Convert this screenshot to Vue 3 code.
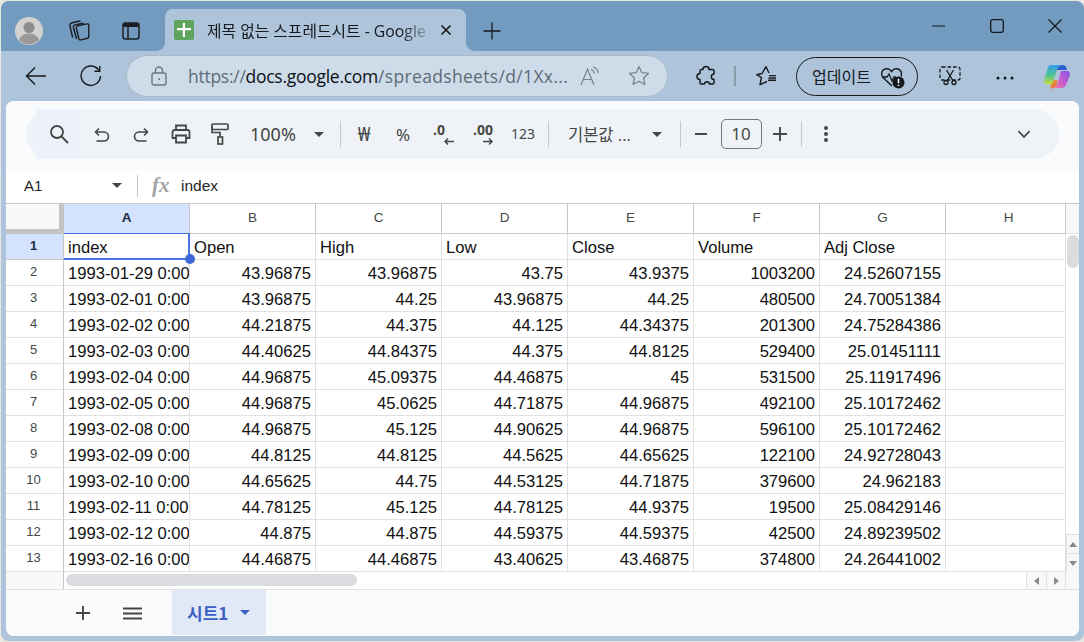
<script setup>
const cols = ['A', 'B', 'C', 'D', 'E', 'F', 'G', 'H']
const heads = ['index', 'Open', 'High', 'Low', 'Close', 'Volume', 'Adj Close', '']
const rows = [
  ['1993-01-29 0:00', '43.96875', '43.96875', '43.75', '43.9375', '1003200', '24.52607155', ''],
  ['1993-02-01 0:00', '43.96875', '44.25', '43.96875', '44.25', '480500', '24.70051384', ''],
  ['1993-02-02 0:00', '44.21875', '44.375', '44.125', '44.34375', '201300', '24.75284386', ''],
  ['1993-02-03 0:00', '44.40625', '44.84375', '44.375', '44.8125', '529400', '25.01451111', ''],
  ['1993-02-04 0:00', '44.96875', '45.09375', '44.46875', '45', '531500', '25.11917496', ''],
  ['1993-02-05 0:00', '44.96875', '45.0625', '44.71875', '44.96875', '492100', '25.10172462', ''],
  ['1993-02-08 0:00', '44.96875', '45.125', '44.90625', '44.96875', '596100', '25.10172462', ''],
  ['1993-02-09 0:00', '44.8125', '44.8125', '44.5625', '44.65625', '122100', '24.92728043', ''],
  ['1993-02-10 0:00', '44.65625', '44.75', '44.53125', '44.71875', '379600', '24.962183', ''],
  ['1993-02-11 0:00', '44.78125', '45.125', '44.78125', '44.9375', '19500', '25.08429146', ''],
  ['1993-02-12 0:00', '44.875', '44.875', '44.59375', '44.59375', '42500', '24.89239502', ''],
  ['1993-02-16 0:00', '44.46875', '44.46875', '43.40625', '43.46875', '374800', '24.26441002', '']
]
</script>

<template>
  <div class="window">
    <header class="titlebar">
      <div class="avatar">
        <svg width="28" height="28" viewBox="0 0 28 28"><circle cx="14" cy="14" r="14" fill="#d4d2d0"/><circle cx="14" cy="10.500" r="5.500" fill="#8f8d8b"/><path d="M4 23c2-5 6-6.500 10-6.500S22 18 24 23a14 14 0 0 1-20 0z" fill="#9a9896"/></svg>
      </div>
      <div class="tb-icon first">
        <svg width="22" height="22" viewBox="0 0 22 22" fill="none" stroke="#1b1f24" stroke-width="1.400" stroke-linejoin="round" stroke-linecap="round"><path d="M9.500 5.800 19 3.900c1-.2 1.800.4 1.800 1.400v11.400c0 .8-.4 1.300-1.200 1.500l-6.700 1.700c-1 .2-1.700-.2-2-1.200L8.300 8c-.2-1 .2-1.900 1.200-2.200z"/><path d="M15 3.200 8 4.600C6 5 5 6 5.500 8l3 10.500"/><path d="M12 1 5 2.500C3 3 1.500 4 2 6l2.500 11"/></svg>
      </div>
      <div class="tb-icon">
        <svg width="20" height="20" viewBox="0 0 20 20" fill="none"><rect x="2" y="2" width="16" height="16" rx="2.500" stroke="#1b1f24" stroke-width="1.500"/><path d="M2 3.500a1.500 1.500 0 0 1 1.500-1.500h13a1.500 1.500 0 0 1 1.500 1.500V6H2z" fill="#1b1f24"/><path d="M7 6v12" stroke="#1b1f24" stroke-width="1.500"/></svg>
      </div>
      <div class="tab">
        <svg class="favicon" width="20" height="20" viewBox="0 0 20 20"><rect width="20" height="20" rx="2" fill="#5ea45c"/><path d="M3 8h14v2.200H11V17H8.800v-6.800H3z" fill="#fff"/><path d="M8.800 3H11v5H8.800z" fill="#fff"/></svg>
        <span class="tab-title">제목 없는 스프레드시트 - Google</span>
        <svg class="tab-close" width="12" height="12" viewBox="0 0 12 12" stroke="#111" stroke-width="1.500"><path d="M1.500 1.500l9 9M10.500 1.500l-9 9"/></svg>
      </div>
      <div class="newtab">
        <svg width="18" height="18" viewBox="0 0 18 18" stroke="#15191e" stroke-width="1.300"><path d="M9 .5v17M.5 9h17"/></svg>
      </div>
      <div class="win-controls">
        <div class="win-btn"><svg width="14" height="14" viewBox="0 0 14 14" stroke="#14181d" stroke-width="1.200"><path d="M0 7h13"/></svg></div>
        <div class="win-btn"><svg width="14" height="14" viewBox="0 0 14 14" fill="none" stroke="#14181d" stroke-width="1.300"><rect x=".7" y=".7" width="12.600" height="12.600" rx="2"/></svg></div>
        <div class="win-btn"><svg width="14" height="14" viewBox="0 0 14 14" stroke="#14181d" stroke-width="1.200"><path d="M.5.500l13 13M13.500.500l-13 13"/></svg></div>
      </div>
    </header>

    <nav class="navbar">
      <div class="nav-btn back"><svg width="22" height="20" viewBox="0 0 22 20" fill="none" stroke="#15191e" stroke-width="1.400"><path d="M21 10H1.500M10 1.500 1.500 10l8.500 8.500"/></svg></div>
      <div class="nav-btn reload"><svg width="22" height="22" viewBox="0 0 22 22" fill="none" stroke="#15191e" stroke-width="1.400"><path d="M19 5.500A9.700 9.700 0 1 0 20.500 11"/><path d="M19.800 1v5.300h-5.300"/></svg></div>
      <div class="address">
        <svg class="lock" width="16" height="20" viewBox="0 0 16 20" fill="none" stroke="#6d7680" stroke-width="1.400"><rect x="1" y="7" width="14" height="12" rx="2"/><path d="M4.500 7V4.500a3.500 3.500 0 0 1 7 0V7"/><circle cx="8" cy="13" r="1" fill="#6d7680" stroke="none"/></svg>
        <span class="url"><span class="url-dim tight">https://</span><span class="tight">docs.google.com</span><span class="url-dim wide">/spreadsheets/d/1Xx...</span></span>
        <svg class="readaloud" width="20" height="20" viewBox="0 0 20 20" fill="none" stroke="#7b848d" stroke-width="1.200"><path d="M1 19 7.500 3 14 19M3.500 13.500h8"/><path d="M11 3.500c2 .5 3 2 3.500 4M13 .8c3 .8 4.800 3.200 5.400 6"/></svg>
        <svg class="star" width="22" height="22" viewBox="0 0 22 22" fill="none" stroke="#7b848d" stroke-width="1.300" stroke-linejoin="round"><path d="M11 1.500l2.800 6.200 6.700.7-5 4.500 1.400 6.600L11 16.200l-5.900 3.300 1.400-6.600-5-4.500 6.700-.7z"/></svg>
      </div>
      <div class="nav-btn ext"><svg width="20" height="22" viewBox="0 0 20 22" fill="none" stroke="#15191e" stroke-width="1.500" stroke-linejoin="round"><path d="M7 4.500c0-4 6-4 6 0h3.500A1.500 1.500 0 0 1 18 6v3c-3.500 0-3.500 5.500 0 5.500v3a1.500 1.500 0 0 1-1.500 1.500h-3c-.5-3-4.500-3-5 0H5.500A1.500 1.500 0 0 1 4 17.500v-3c-4 0-4-6 0-6V6a1.500 1.500 0 0 1 1.500-1.500z"/></svg></div>
      <div class="nav-sep"></div>
      <div class="nav-btn favs"><svg width="22" height="22" viewBox="0 0 22 22" fill="none" stroke="#15191e" stroke-width="1.400" stroke-linejoin="round"><path d="M12 16.500 5 19.700l1.500-7.200L1.700 9.700 7 8.500 11 1.700 14 8"/><path d="M14 10.600h7M13.500 13h7.500M13 15.300h8"/></svg></div>
      <div class="update">
        <span class="update-text">업데이트</span>
        <svg class="heart" width="26" height="24" viewBox="0 0 26 24" fill="none"><path d="M12 20 3 11.500C.5 8.500 1.500 4 5 3c2.500-.7 5 .3 6.500 2.500C13 3.300 15.500 2.300 18 3c3.300 1 4.300 4.500 3 7.500" stroke="#15191e" stroke-width="1.400"/><path d="M2 11h5l2-3 3 7 2-4h2" stroke="#15191e" stroke-width="1.300"/><circle cx="18.500" cy="16.500" r="6" fill="#15191e"/><path d="M18.500 12.800v4.400M18.500 18.800v1.200" stroke="#fff" stroke-width="1.600"/></svg>
      </div>
      <div class="nav-btn shot"><svg width="22" height="20" viewBox="0 0 22 20" fill="none" stroke="#15191e" stroke-width="1.300"><rect x="1" y="1" width="20" height="13" rx="2" stroke-dasharray="3.500 2"/><path d="M7.500 4l6 10M14.500 4l-6 10"/><circle cx="7" cy="16.500" r="2"/><circle cx="15" cy="16.500" r="2"/></svg></div>
      <div class="nav-btn dots"><svg width="18" height="4" viewBox="0 0 18 4" fill="#15191e"><circle cx="2" cy="2" r="1.500"/><circle cx="9" cy="2" r="1.500"/><circle cx="16" cy="2" r="1.500"/></svg></div>
      <div class="nav-btn copilot">
        <svg width="28" height="28" viewBox="0 0 28 28">
          <defs>
            <linearGradient id="cpa" x1="0" y1="0" x2="0" y2="1"><stop offset="0" stop-color="#2f9fe6"/><stop offset=".55" stop-color="#55c48f"/><stop offset="1" stop-color="#d2dc3e"/></linearGradient>
            <linearGradient id="cpb" x1="1" y1="0" x2="0" y2="1"><stop offset="0" stop-color="#7f55e6"/><stop offset=".6" stop-color="#d25fcb"/><stop offset="1" stop-color="#f47a94"/></linearGradient>
            <linearGradient id="cpc" x1="0" y1="0" x2="1" y2="1"><stop offset="0" stop-color="#f0a23c"/><stop offset="1" stop-color="#e4603f"/></linearGradient>
          </defs>
          <path d="M14 7c.5-2 2-4 5-4h1c2 0 3 1.500 3.500 3l.5 2H14z" fill="#2e62d4"/>
          <path d="M8 18h6.500L14 22c-.5 2.500-3 4.500-5.500 4.500-2 0-1.500-1-.5-2z" fill="url(#cpc)"/>
          <path d="M8 3h11c-3 0-4.500 2-5 4l-3.500 12c-.5 2-2 3.500-4 3.500h-2C2 22.500.5 20 1.300 17.500L4.500 7C5.300 4.500 6 3 8 3z" fill="url(#cpa)"/>
          <path d="M18 9h6c2 0 3.500 2 2.800 4.500L24 21c-1 3-3 5-6 5H9c3 0 5-2 5.800-4.500z" fill="url(#cpb)"/>
        </svg>
      </div>
    </nav>

    <main class="content">
      <div class="toolstrip">
        <div class="pill">
          <div class="tool search"><svg width="20" height="20" viewBox="0 0 20 20" fill="none" stroke="#444746" stroke-width="1.800"><circle cx="8" cy="8" r="6"/><path d="M12.500 12.500 19 19"/></svg></div>
          <div class="tool"><svg width="16" height="16" viewBox="0 0 16 16" fill="none" stroke="#444746" stroke-width="1.600"><path d="M2.500 15h7.500a4.500 4.500 0 0 0 0-9H2M5 2.500 1.500 6 5 9.500"/></svg></div>
          <div class="tool"><svg width="16" height="16" viewBox="0 0 16 16" fill="none" stroke="#444746" stroke-width="1.600"><path d="M13.500 15H6a4.500 4.500 0 0 1 0-9h8M11 2.500 14.500 6 11 9.500"/></svg></div>
          <div class="tool"><svg width="20" height="20" viewBox="0 0 20 20" fill="none" stroke="#444746" stroke-width="1.800"><path d="M5 6V1.500h10V6M5 14H1.500V8a2 2 0 0 1 2-2h13a2 2 0 0 1 2 2v6H15"/><path d="M5 11.500h10v7H5z"/></svg></div>
          <div class="tool"><svg width="18" height="22" viewBox="0 0 18 22" fill="none" stroke="#444746" stroke-width="1.700"><rect x="1" y="1" width="16" height="5.500" rx="1"/><path d="M1 3.500v6h8v4"/><rect x="7" y="14" width="4.500" height="7"/></svg></div>
          <div class="tool zoom">100%</div>
          <div class="tool"><span class="caret"></span></div>
          <div class="tool"><span class="sep"></span></div>
          <div class="tool won">₩</div>
          <div class="tool pct">%</div>
          <div class="tool">
            <div class="dec dec-one"><span class="dec-text">.0</span><svg class="dec-arrow" width="10" height="7" viewBox="0 0 10 7" fill="none" stroke="#444746" stroke-width="1.500"><path d="M10 3.500H1M4 .5l-3 3 3 3"/></svg></div>
          </div>
          <div class="tool">
            <div class="dec"><span class="dec-text">.00</span><svg class="dec-arrow" width="10" height="7" viewBox="0 0 10 7" fill="none" stroke="#444746" stroke-width="1.500"><path d="M0 3.500h9M6 .5l3 3-3 3"/></svg></div>
          </div>
          <div class="tool numfmt">123</div>
          <div class="tool"><span class="sep"></span></div>
          <div class="tool font">기본값 ...</div>
          <div class="tool"><span class="caret"></span></div>
          <div class="tool"><span class="sep"></span></div>
          <div class="tool"><svg width="14" height="4" viewBox="0 0 14 4"><path d="M1 2h12" stroke="#444746" stroke-width="2"/></svg></div>
          <div class="tool"><div class="fontsize">10</div></div>
          <div class="tool"><svg width="14" height="14" viewBox="0 0 14 14"><path d="M0 7h14M7 0v14" stroke="#444746" stroke-width="1.900"/></svg></div>
          <div class="tool"><span class="sep"></span></div>
          <div class="tool"><svg width="6" height="18" viewBox="0 0 6 18" fill="#444746"><circle cx="3" cy="3" r="2"/><circle cx="3" cy="9" r="2"/><circle cx="3" cy="15" r="2"/></svg></div>
          <div></div>
          <div class="tool"><svg width="14" height="9" viewBox="0 0 14 9" fill="none" stroke="#444746" stroke-width="1.800"><path d="M1.500 1.200 7 7l5.500-5.800"/></svg></div>
        </div>
      </div>

      <div class="formula">
        <span class="namebox">A1</span>
        <span class="caret namecaret"></span>
        <span class="fsep"></span>
        <span class="fx">fx</span>
        <span class="fval">index</span>
      </div>

      <div class="sheet">
        <div class="grid">
          <div class="corner"></div>
          <div v-for="c in cols" :key="c" class="colhead" :class="{ active: c === 'A', last: c === 'H' }">{{ c }}</div>
          <div class="vtrack-head"></div>

          <div class="rowhead active">1</div>
          <div v-for="(h, i) in heads" :key="h + i" class="cell" :class="{ selected: i === 0 }">
            {{ h }}<span v-if="i === 0" class="handle"></span>
          </div>

          <template v-for="(r, ri) in rows" :key="ri">
            <div class="rowhead">{{ ri + 2 }}</div>
            <div v-for="(v, ci) in r" :key="ci" class="cell" :class="{ right: ci > 0 }">{{ v }}</div>
          </template>

          <div class="vtrack">
            <span class="vthumb"></span>
            <div class="varrow"><span class="arr-up"></span></div>
            <div class="varrow"><span class="arr-down"></span></div>
          </div>
        </div>
        <div class="hscroll">
          <div class="hs-head"></div>
          <div class="hs-track"><span class="hthumb"></span></div>
          <div class="hs-arrow"><span class="arr-left"></span></div>
          <div class="hs-arrow"><span class="arr-right"></span></div>
          <div class="hs-end"></div>
        </div>
      </div>

      <footer class="sheetbar">
        <div class="sb-btn"><svg width="14" height="14" viewBox="0 0 14 14"><path d="M0 7h14M7 0v14" stroke="#444746" stroke-width="1.900"/></svg></div>
        <div class="sb-btn menu"><svg width="19" height="13" viewBox="0 0 19 13"><path d="M0 1.500h19M0 6.500h19M0 11.500h19" stroke="#444746" stroke-width="1.900"/></svg></div>
        <div class="sheettab"><span>시트1</span><span class="caret blue"></span></div>
      </footer>
    </main>
  </div>
</template>

<style>
html, body { margin: 0; background: #e9e7e4; overflow: hidden; }
</style>

<style scoped>
.window {
  box-sizing: border-box;
  width: 1083px;
  height: 640px;
  margin: 1px 0 0 1px;
  background: #adc4da;
  border-radius: 8px;
  overflow: hidden;
  display: flex;
  flex-direction: column;
  font-family: "Open Sans", "Noto Sans CJK KR", sans-serif;
  color: #15191e;
}

/* title bar */
.titlebar {
  height: 50px;
  flex: none;
  background: #739abf;
  display: flex;
  align-items: flex-start;
}
.avatar { margin: 16px 0 0 14px; width: 28px; height: 28px; }
.tb-icon { width: 52px; height: 30px; margin-top: 15px; display: flex; align-items: center; justify-content: center; }
.tb-icon.first { margin-left: 10px; }
.tab {
  position: relative;
  box-sizing: border-box;
  width: 301px;
  height: 42px;
  margin: 8px 0 0 8px;
  padding: 0 14px 0 9px;
  background: #adc4da;
  border-radius: 8px 8px 0 0;
  display: flex;
  align-items: center;
  gap: 13px;
}
.tab::before, .tab::after {
  content: "";
  position: absolute;
  bottom: 0;
  width: 8px;
  height: 8px;
  background: radial-gradient(circle at 0 0, #739abf 7.500px, #adc4da 8px);
}
.tab::before { left: -8px; }
.tab::after { right: -8px; background: radial-gradient(circle at 100% 0, #739abf 7.500px, #adc4da 8px); }
.favicon { flex: none; }
.tab-title {
  flex: none;
  white-space: nowrap;
  font-size: 15.800px;
  color: #15191e;
  -webkit-mask-image: linear-gradient(90deg, #000 88%, rgba(0, 0, 0, .25) 100%);
  mask-image: linear-gradient(90deg, #000 88%, rgba(0, 0, 0, .25) 100%);
}
.tab-close { flex: none; margin-left: auto; }
.newtab { width: 18px; height: 18px; margin: 21px 0 0 17px; }
.win-controls { margin-left: auto; display: flex; }
.win-btn { width: 58px; height: 50px; display: flex; align-items: center; justify-content: center; }

/* nav bar */
.navbar {
  height: 50px;
  flex: none;
  display: flex;
  align-items: center;
  position: relative;
}
.nav-btn { display: flex; align-items: center; justify-content: center; flex: none; }
.back { width: 30px; margin-left: 20px; }
.reload { width: 30px; margin-left: 25px; }
.address {
  box-sizing: border-box;
  width: 542px;
  height: 42px;
  margin-left: 20px;
  background: #cddce8;
  border: 1px solid #a9bacb;
  border-radius: 21px;
  display: flex;
  align-items: center;
  padding-left: 24px;
}
.lock { flex: none; }
.url { margin-left: 21px; font-size: 17.500px; white-space: nowrap; color: #0c1116; width: 378px; }
.url-dim { color: #5f6b77; }
.tight { letter-spacing: -.27px; }
.wide { letter-spacing: .33px; }
.readaloud { margin-left: 14px; flex: none; }
.star { margin-left: 28px; flex: none; }
.ext { width: 24px; margin-left: 26px; }
.nav-sep { width: 2px; height: 20px; background: #8b9aa9; margin-left: 16px; flex: none; }
.favs { width: 26px; margin-left: 17px; }
.update {
  box-sizing: border-box;
  width: 122px;
  height: 39px;
  margin-left: 17px;
  border: 1.500px solid #15191e;
  border-radius: 20px;
  display: flex;
  align-items: center;
  padding-left: 15px;
  flex: none;
}
.update-text { font-size: 16px; white-space: nowrap; width: 60px; flex: none; }
.heart { margin-left: 8px; margin-top: 3px; flex: none; }
.shot { width: 24px; margin-left: 20px; }
.dots { width: 20px; margin-left: 33px; margin-top: 4px; }
.copilot { width: 28px; margin-left: 28px; }

/* content */
.content {
  width: 1073px;
  height: 535px;
  margin-left: 5px;
  background: #fff;
  border-radius: 8px;
  overflow: hidden;
  flex: none;
  display: flex;
  flex-direction: column;
}
.toolstrip { height: 69px; flex: none; background: #f9fbfd; padding: 8px 20px 0 20px; box-sizing: border-box; }
.pill {
  box-sizing: border-box;
  height: 50px;
  width: 1033px;
  background: #eff3f8;
  border-radius: 25px;
  padding: 0 15px 0 13px;
  display: grid;
  grid-template-columns: 40px 46px 32px 48px 30px 70px 28px 14px 34px 44px 38px 40px 40px 10px 88px 32px 14px 28px 52px 26px 16px 34px 1fr 40px;
  align-items: center;
  color: #444746;
}
.tool { display: flex; align-items: center; justify-content: center; height: 50px; }
.search { background: #edf2fa; margin: 0 -3px; }
.zoom { justify-content: flex-start; padding-left: 15px; font-size: 18px; font-family: "Noto Sans", sans-serif; }
.won { font-size: 19px; margin-top: -1px; font-family: "Noto Sans", "Noto Sans CJK KR", sans-serif; }
.pct { font-size: 17px; font-family: "Noto Sans", sans-serif; }
.numfmt { font-size: 14px; margin-top: -1px; font-family: "Noto Sans", sans-serif; }
.dec { display: flex; flex-direction: column; align-items: flex-end; }
.dec-one { padding-right: 10px; }
.dec-one .dec-arrow { margin-right: -9px; }
.dec-text { font-size: 14px; line-height: 14px; font-weight: 700; font-family: "Noto Sans", sans-serif; }
.dec-arrow { display: block; margin-top: 1px; }
.font { justify-content: flex-start; padding-left: 15px; font-size: 16.500px; white-space: nowrap; }
.caret { display: block; width: 0; height: 0; border-left: 5px solid transparent; border-right: 5px solid transparent; border-top: 5px solid #444746; }
.sep { display: block; width: 1px; height: 26px; background: #c7c7c7; }
.fontsize {
  box-sizing: border-box;
  width: 41px;
  height: 30px;
  border: 1px solid #747775;
  border-radius: 5px;
  text-align: center;
  line-height: 28px;
  font-size: 17px;
  font-family: "Noto Sans", sans-serif;
}

/* formula bar */
.formula {
  height: 34px;
  padding-bottom: 2px;
  flex: none;
  display: flex;
  align-items: center;
  border-bottom: 1px solid #c7c7c7;
  box-sizing: border-box;
  padding-left: 18px;
  font-family: "Liberation Sans", sans-serif;
  font-size: 15px;
}
.namebox { width: 88px; color: #1f1f1f; }
.namecaret { flex: none; }
.fsep { width: 1px; height: 22px; background: #c7c7c7; margin-left: 15px; }
.fx { font-family: "Liberation Serif", serif; font-style: italic; font-size: 21px; color: #a3a3a3; margin-left: 14px; width: 29px; font-weight: 700; }
.fval { color: #1f1f1f; font-size: 15.500px; }

/* grid */
.sheet { flex: none; font-family: "Liberation Sans", sans-serif; }
.grid {
  display: grid;
  grid-template-columns: 58px repeat(7, 126px) 120px 13px;
  grid-template-rows: 30px repeat(13, 26px);
}
.corner { box-sizing: border-box; background: #f8f9fa; border-right: 5px solid #c4c4c4; border-bottom: 5px solid #c4c4c4; }
.colhead {
  box-sizing: border-box;
  border-right: 1px solid #c7c7c7;
  border-bottom: 1px solid #c7c7c7;
  text-align: center;
  line-height: 28px;
  font-size: 13.500px;
  color: #444746;
}
.colhead.last { padding-left: 6px; }
.colhead.active { background: #d3e3fd; font-weight: 700; color: #1f2a44; }
.vtrack-head { background: #f8f8f8; border-bottom: 1px solid #e0e0e0; box-sizing: border-box; }
.rowhead {
  box-sizing: border-box;
  border-right: 1px solid #c7c7c7;
  border-bottom: 1px solid #e1e1e1;
  text-align: center;
  line-height: 24px;
  font-size: 13px;
  color: #444746;
  padding-right: 2px;
}
.rowhead.active { background: #d3e3fd; font-weight: 700; color: #1f2a44; border-bottom-color: #c7c7c7; }
.cell {
  box-sizing: border-box;
  position: relative;
  border-right: 1px solid #e1e1e1;
  border-bottom: 1px solid #e1e1e1;
  padding: 1px 4px 0 4px;
  font-size: 16.600px;
  line-height: 26px;
  color: #111;
  white-space: nowrap;
  overflow: hidden;
}
.cell.right { text-align: right; }
.cell.selected { overflow: visible; border: 2px solid #4a74dc; border-top-width: 0; border-left-width: 0; box-shadow: 0 -1px 0 #4a74dc; z-index: 2; }
.handle { position: absolute; right: -7px; bottom: -6px; width: 10px; height: 10px; border-radius: 50%; background: #3f68d6; }
.vtrack {
  grid-column: 10;
  grid-row: 2 / 15;
  position: relative;
  background: #fff;
  display: flex;
  flex-direction: column;
  justify-content: flex-end;
}
.varrow {
  box-sizing: border-box;
  height: 19px;
  background: #f8f8f8;
  border-left: 1px solid #e1e1e1;
  border-top: 1px solid #e1e1e1;
  display: flex;
  align-items: center;
  justify-content: center;
}
.vthumb { position: absolute; left: 1px; top: 1px; width: 12px; height: 33px; border-radius: 6px; background: #dadce0; }
.arr-up { width: 0; height: 0; border-left: 4px solid transparent; border-right: 4px solid transparent; border-bottom: 5px solid #8a8a8a; }
.arr-down { width: 0; height: 0; border-left: 4px solid transparent; border-right: 4px solid transparent; border-top: 5px solid #8a8a8a; }
.arr-left { width: 0; height: 0; border-top: 4px solid transparent; border-bottom: 4px solid transparent; border-right: 5px solid #8a8a8a; }
.arr-right { width: 0; height: 0; border-top: 4px solid transparent; border-bottom: 4px solid transparent; border-left: 5px solid #8a8a8a; }
.hscroll { height: 17px; display: grid; grid-template-columns: 58px 962px 20px 19px 14px; border-bottom: 1px solid #e1e1e1; box-sizing: content-box; }
.hs-head { background: #f8f8f8; border-right: 1px solid #c7c7c7; box-sizing: border-box; }
.hs-track { position: relative; }
.hthumb { position: absolute; left: 2px; top: 2px; width: 291px; height: 12px; border-radius: 6px; background: #dadce0; }
.hs-arrow { background: #f8f8f8; border-left: 1px solid #e1e1e1; box-sizing: border-box; display: flex; align-items: center; justify-content: center; }
.hs-end { background: #f8f8f8; border-left: 1px solid #e1e1e1; }

/* sheet bar */
.sheetbar { flex: 1; background: #f9fbfd; display: flex; align-items: flex-start; }
.sb-btn { width: 28px; height: 46px; margin-left: 63px; display: flex; align-items: center; justify-content: center; }
.sb-btn.menu { margin-left: 21px; }
.sheettab {
  box-sizing: border-box;
  margin-left: 26px;
  width: 94px;
  height: 45px;
  padding-left: 15px;
  background: #e1e8f7;
  display: flex;
  align-items: center;
  gap: 12px;
  color: #3d5fc4;
  font-family: "Noto Sans CJK KR", sans-serif;
  font-size: 17px;
  font-weight: 700;
}
.caret.blue { border-top-color: #3d5fc4; border-left-width: 5.500px; border-right-width: 5.500px; border-top-width: 5.500px; }
</style>
